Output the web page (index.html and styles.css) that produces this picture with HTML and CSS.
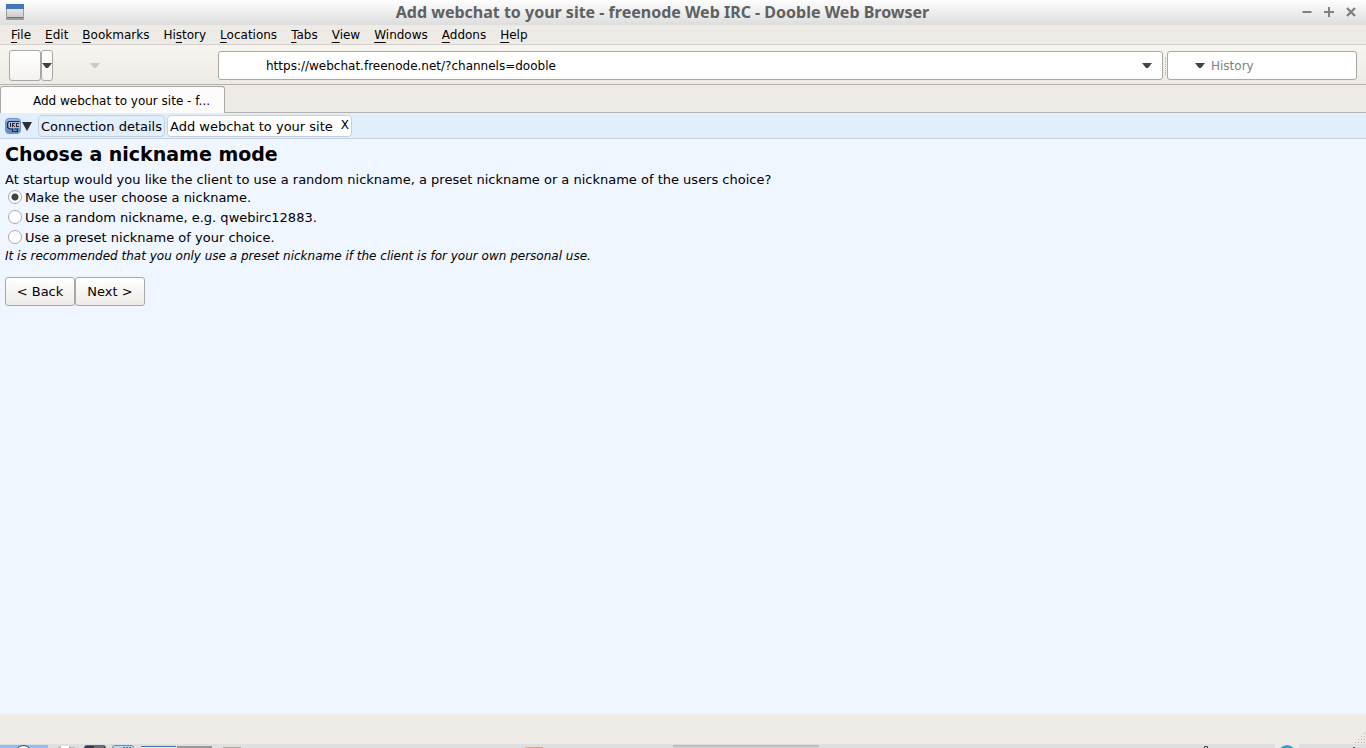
FILE: index.html
```
<!DOCTYPE html>
<html lang="en">
<head>
    <meta charset="UTF-8">
    <meta name="viewport" content="width=device-width, initial-scale=1.0">
    <title>Add webchat to your site - freenode Web IRC</title>
    <link rel="stylesheet" href="styles.css">
</head>
<body>
    <header class="titlebar">
        <svg class="app-icon" width="18" height="16" viewBox="0 0 18 16">
            <defs>
                <linearGradient id="pane" x1="0" y1="0" x2="0" y2="1">
                    <stop offset="0" stop-color="#e6e6e6"/>
                    <stop offset="1" stop-color="#c9c9c9"/>
                </linearGradient>
            </defs>
            <rect x="0" y="0" width="18" height="16" rx="1" fill="#9a9c9f"/>
            <rect x="0" y="0" width="18" height="5" fill="#4376b8"/>
            <rect x="1" y="5" width="16" height="9" fill="url(#pane)"/>
            <rect x="1" y="13" width="16" height="1" fill="#4d79af"/>
        </svg>
        <h1 class="window-title">Add webchat to your site - freenode Web IRC - Dooble Web Browser</h1>
        <div class="window-buttons">
            <button class="window-button" aria-label="Minimize">
                <svg width="12" height="12" viewBox="0 0 12 12"><path d="M1.500 6h9" stroke="#808080" stroke-width="2"/></svg>
            </button>
            <button class="window-button" aria-label="Maximize">
                <svg width="12" height="12" viewBox="0 0 12 12"><path d="M1 6h10M6 1v10" stroke="#808080" stroke-width="2"/></svg>
            </button>
            <button class="window-button" aria-label="Close">
                <svg width="12" height="12" viewBox="0 0 12 12"><path d="M2 2l8 8M10 2l-8 8" stroke="#808080" stroke-width="2.300"/></svg>
            </button>
        </div>
    </header>

    <nav class="menubar">
        <button class="menu"><u>F</u>ile</button>
        <button class="menu"><u>E</u>dit</button>
        <button class="menu"><u>B</u>ookmarks</button>
        <button class="menu">Hi<u>s</u>tory</button>
        <button class="menu"><u>L</u>ocations</button>
        <button class="menu"><u>T</u>abs</button>
        <button class="menu"><u>V</u>iew</button>
        <button class="menu"><u>W</u>indows</button>
        <button class="menu"><u>A</u>ddons</button>
        <button class="menu"><u>H</u>elp</button>
    </nav>

    <div class="toolbar">
        <div class="nav-buttons">
            <button class="nav-button" aria-label="Back"></button>
            <button class="nav-arrow" aria-label="Back history">
                <svg width="10" height="6" viewBox="0 0 10 6"><path d="M0 0h10L6 5H4z" fill="#444"/></svg>
            </button>
            <button class="nav-forward" aria-label="Forward history" disabled>
                <svg width="10" height="6" viewBox="0 0 10 6"><path d="M0 0h10L6 5H4z" fill="#ccc9c6"/></svg>
            </button>
        </div>
        <div class="field address">
            <input class="address-input" type="text" aria-label="Address" value="https://webchat.freenode.net/?channels=dooble">
            <button class="drop" aria-label="Show addresses">
                <svg width="10" height="6" viewBox="0 0 10 6"><path d="M0 0h10L6 5H4z" fill="#444"/></svg>
            </button>
        </div>
        <div class="grip"></div>
        <div class="field search">
            <button class="drop" aria-label="Search engine">
                <svg width="10" height="6" viewBox="0 0 10 6"><path d="M0 0h10L6 5H4z" fill="#444"/></svg>
            </button>
            <input class="search-input" type="text" aria-label="Search history" placeholder="History">
        </div>
    </div>

    <div class="tabbar">
        <button class="tab">Add webchat to your site - f...</button>
    </div>

    <div class="irc-bar">
        <button class="irc-menu" aria-label="Menu">
            <svg width="27" height="16" viewBox="0 0 27 16">
                <defs>
                    <linearGradient id="irc" x1="0" y1="0" x2="0" y2="1">
                        <stop offset="0" stop-color="#91b7e6"/>
                        <stop offset="1" stop-color="#5b88c6"/>
                    </linearGradient>
                </defs>
                <rect x="0.500" y="0.500" width="15" height="15" rx="3.500" fill="url(#irc)" stroke="#7094c4"/>
                <path d="M4 3.500h10.500M4 3.500L2.500 5v4.500l2 1.500h3v2.500h5V11h-3" fill="none" stroke="#222b3c" stroke-width="1.200"/>
                <rect x="4" y="4" width="11" height="6" fill="#b5bfd0"/>
                <path d="M5.500 5v4M7.500 9V5M8 5.500h2M8 7.500h1M9.500 8v1M14 5.500h-2M11.500 5v4M12 8.500h2" fill="none" stroke="#30212a"/>
                <path d="M17 4h10l-5 9z" fill="#2d3033"/>
            </svg>
        </button>
        <a class="irc-tab" href="#">Connection details</a>
        <div class="irc-tab active"><a href="#">Add webchat to your site</a><button class="close" aria-label="Close tab">X</button></div>
    </div>

    <main class="page">
        <h2 class="page-title">Choose a nickname mode</h2>
        <form class="wizard">
            <p class="question">At startup would you like the client to use a random nickname, a preset nickname or a nickname of the users choice?</p>
            <label class="choice"><input type="radio" name="nick" checked>Make the user choose a nickname.</label>
            <label class="choice"><input type="radio" name="nick">Use a random nickname, e.g. qwebirc12883.</label>
            <label class="choice"><input type="radio" name="nick">Use a preset nickname of your choice.</label>
            <p class="hint">It is recommended that you only use a preset nickname if the client is for your own personal use.</p>
            <div class="actions">
                <button class="action" type="button">&lt; Back</button>
                <button class="action" type="button">Next &gt;</button>
            </div>
        </form>
    </main>

    <div class="statusbar">
        <svg width="12" height="12" viewBox="0 0 12 12" fill="#b6b0aa">
            <path d="M10 1h1v1h-1zM7 4h1v1h-1zM10 4h1v1h-1zM4 7h1v1h-1zM7 7h1v1h-1zM10 7h1v1h-1zM1 10h1v1h-1zM4 10h1v1h-1zM7 10h1v1h-1zM10 10h1v1h-1z"/>
        </svg>
    </div>

    <footer class="taskbar">
        <svg width="820" height="4" viewBox="0 0 820 4">
            <rect x="0" y="1" width="48" height="3" fill="#8bc0ef"/>
            <circle cx="23.500" cy="10" r="8.500" fill="#eef5fb" stroke="#27486e"/>
            <path d="M58 4V3h2V2h10v1h5v1z" fill="#b3b3b3"/>
            <rect x="61" y="2" width="8" height="2" fill="#fff"/>
            <rect x="84.500" y="1.500" width="21" height="9" rx="2" fill="#343b4e" stroke="#4c6a93"/>
            <rect x="94" y="2" width="10" height="2" fill="#686d78"/>
            <rect x="112.500" y="1.500" width="21" height="9" rx="2" fill="#add6f5" stroke="#7e8c9c"/>
            <path d="M123 3.500h8" stroke="#4d7caa" stroke-dasharray="2 1"/>
            <rect x="141" y="2" width="35" height="1" fill="#3d6f9f"/>
            <rect x="141" y="3" width="35" height="1" fill="#f1f5f8"/>
            <rect x="177" y="2" width="35" height="2" fill="#999"/>
            <rect x="223" y="3" width="18" height="1" fill="#aaa9a3"/>
            <rect x="525" y="3" width="18" height="1" fill="#e9a566"/>
            <rect x="673" y="1" width="146" height="3" fill="#c9c9c9"/>
            <path d="M673 1.500h146" stroke="#b9b9b9"/>
        </svg>
        <svg width="166" height="4" viewBox="0 0 166 4">
            <path d="M4.500 4V2.500h3V4" fill="#ddd" stroke="#444"/>
            <rect x="75" y="0" width="24" height="4" fill="#eeebe6"/>
            <circle cx="87" cy="10" r="9" fill="#31a3dc"/>
            <rect x="153" y="3" width="2" height="1" fill="#555"/>
        </svg>
    </footer>
</body>
</html>
```
FILE: styles.css
```
* {
    margin: 0;
    padding: 0;
    box-sizing: border-box;
}

body {
    min-height: 100vh;
    display: flex;
    flex-direction: column;
    background: #eeebe6;
    color: #000;
    font-family: "DejaVu Sans", sans-serif;
    font-size: 12px;
}

button, input {
    font: inherit;
    color: inherit;
}

button {
    background: none;
    border: none;
}

svg {
    display: block;
}

a {
    color: inherit;
    text-decoration: none;
}

/* window title */
.titlebar {
    display: flex;
    align-items: center;
    height: 25px;
    padding: 0 9px 2px 6px;
    background: linear-gradient(#fefefe, #dcdddc);
}

.window-title {
    flex: 1;
    text-align: center;
    font-family: "Noto Sans", sans-serif;
    font-size: 16px;
    line-height: 20px;
    color: #606060;
}

.window-buttons {
    display: flex;
    gap: 10px;
}

/* menus */
.menubar {
    display: flex;
    gap: 14px;
    height: 20px;
    padding: 0 11px;
    border-bottom: 1px solid #d3d0cd;
}

.menu {
    line-height: 18px;
}

.menu u {
    text-underline-offset: 3px;
}

/* toolbar */
.toolbar {
    display: flex;
    align-items: center;
    height: 40px;
    padding: 2px 9px 0;
    background: linear-gradient(#f8f5f0, #eeebe6);
    border-bottom: 1px solid #b7b1ad;
}

.nav-buttons {
    display: flex;
    align-items: center;
    width: 209px;
}

.nav-button, .nav-arrow {
    height: 31px;
    border: 1px solid #aaa8a5;
    border-radius: 3px;
    background: linear-gradient(#fff, #f5f3f1);
}

.nav-button {
    width: 32px;
}

.nav-arrow {
    width: 12px;
    display: flex;
    align-items: center;
    justify-content: center;
}

.nav-forward {
    padding-left: 37px;
}

.field {
    display: flex;
    align-items: center;
    height: 29px;
    background: #fff;
    border: 1px solid #aaa8a5;
    border-radius: 3px;
}

.field input {
    min-width: 0;
    flex: 1;
    border: none;
    background: none;
    outline: none;
}

.address {
    flex: 1;
    padding: 0 10px 0 47px;
}

.grip {
    height: 18px;
    margin: 0 1px 0 2px;
    border-left: 1px dotted #b5b1ad;
}

.search {
    width: 190px;
    gap: 6px;
    padding-left: 27px;
}

.search-input::placeholder {
    color: #808080;
    opacity: 1;
}

/* browser tabs */
.tabbar {
    display: flex;
    align-items: flex-end;
    height: 28px;
    border-bottom: 1px solid #b7b1ad;
}

.tab {
    width: 225px;
    height: 27px;
    margin-bottom: -1px;
    padding: 2px 0 0 32px;
    text-align: left;
    background: #fdfcfb;
    border: 1px solid #aaa8a5;
    border-bottom: none;
    border-radius: 3px 3px 0 0;
}

/* webchat */
.irc-bar {
    display: flex;
    align-items: center;
    gap: 2px;
    height: 26px;
    padding: 0 5px;
    background: #e1eefb;
    border-bottom: 1px solid #c4d1e1;
    font-size: 13px;
}

.irc-menu {
    margin-right: 4px;
}

.irc-tab {
    display: flex;
    align-items: flex-start;
    height: 22px;
    padding: 0 2px;
    line-height: 22px;
    border: 1px solid #c5d1e2;
    border-radius: 4px;
}

.irc-tab.active {
    background: #fff;
}

.close {
    padding-left: 8px;
    font-size: 12px;
    line-height: 18px;
}

.page {
    flex: 1;
    padding: 3px 5px;
    background: #eff6ff;
    font-size: 13px;
}

.page-title {
    font-size: 19px;
    line-height: 24px;
}

.question {
    margin-top: 6px;
    line-height: 15px;
}

.choice {
    display: flex;
    align-items: center;
    width: max-content;
    height: 20px;
    gap: 3px;
}

.choice input {
    appearance: none;
    width: 14px;
    height: 14px;
    margin-left: 3px;
    border: 1px solid #aaa;
    border-radius: 50%;
    background: #fff;
}

.choice input:checked {
    background: radial-gradient(circle, #444 3px, #fff 4px);
}

.hint {
    font-size: 12px;
    line-height: 18px;
    font-style: italic;
}

.actions {
    display: flex;
    margin-top: 12px;
}

.action {
    width: 70px;
    height: 29px;
    border: 1px solid #aaa8a5;
    border-radius: 3px;
    background: linear-gradient(#fff, #eeebe8);
}

/* bottom of the window and desktop panel */
.statusbar {
    display: flex;
    justify-content: flex-end;
    align-items: flex-end;
    height: 30px;
}

.taskbar {
    display: flex;
    justify-content: space-between;
    height: 4px;
    overflow: hidden;
    background: #dedfde;
}
```
